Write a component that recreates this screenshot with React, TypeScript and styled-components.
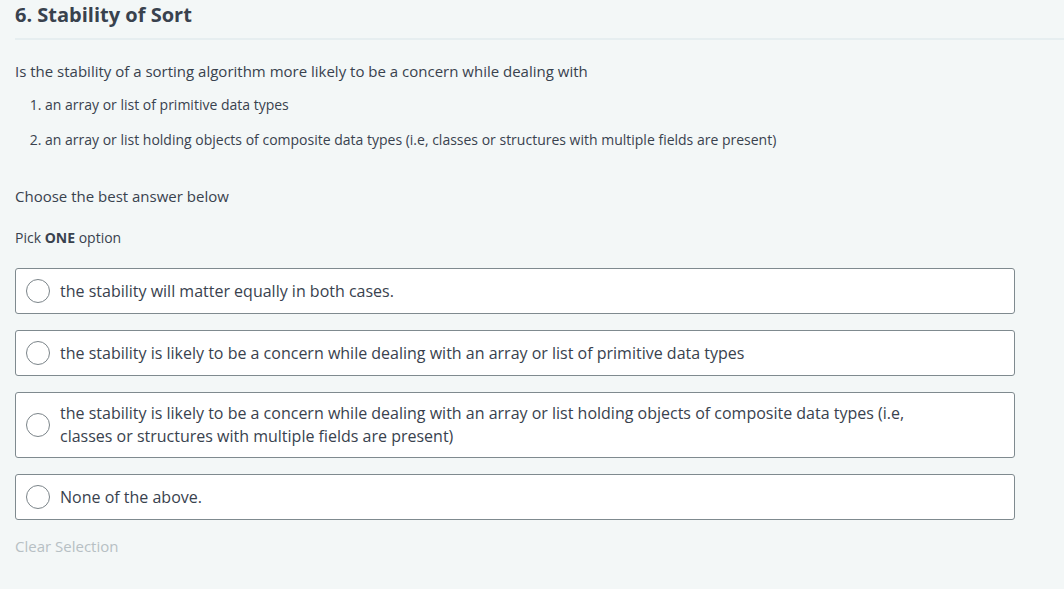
import React, { useState } from 'react';
import styled, { createGlobalStyle } from 'styled-components';

const GlobalStyle = createGlobalStyle`
  html, body {
    margin: 0;
    padding: 0;
    background: #f3f7f7;
  }
  body {
    font-family: 'Open Sans', 'Liberation Sans', sans-serif;
    color: #39424e;
  }
`;

interface IOption {
  id: number;
  label: string;
}

const options: IOption[] = [
  { id: 1, label: 'the stability will matter equally in both cases.' },
  {
    id: 2,
    label:
      'the stability is likely to be a concern while dealing with an array or list of primitive data types',
  },
  {
    id: 3,
    label:
      'the stability is likely to be a concern while dealing with an array or list holding objects of composite data types (i.e, classes or structures with multiple fields are present)',
  },
  { id: 4, label: 'None of the above.' },
];

const App: React.FC = () => {
  const [selected, setSelected] = useState<number | null>(null);

  return (
    <SPage>
      <GlobalStyle />
      <SHeader>
        <h1 className="title">6. Stability of Sort</h1>
      </SHeader>
      <SBody>
        <p className="question">
          Is the stability of a sorting algorithm more likely to be a concern while dealing with
        </p>
        <ol className="cases">
          <li>an array or list of primitive data types</li>
          <li>
            an array or list holding objects of composite data types (i.e, classes or structures
            with multiple fields are present)
          </li>
        </ol>
        <p className="prompt">Choose the best answer below</p>
        <p className="pick">
          Pick <b>ONE</b> option
        </p>
        <SOptions>
          {options.map((opt) => (
            <SOption key={opt.id} onClick={() => setSelected(opt.id)}>
              <SRadio $checked={selected === opt.id} />
              <span className="label">{opt.label}</span>
            </SOption>
          ))}
        </SOptions>
        <SClear onClick={() => setSelected(null)}>Clear Selection</SClear>
      </SBody>
    </SPage>
  );
};

export default App;

const SPage = styled.div`
  width: 1064px;
  height: 589px;
  overflow: hidden;
  padding-left: 15px;
  box-sizing: border-box;
`;

const SHeader = styled.header`
  border-bottom: 2px solid #e6eef0;
  height: 38px;
  .title {
    margin: 0;
    padding-top: 1px;
    font-size: 20px;
    line-height: 27px;
    font-weight: 700;
    color: #39424e;
  }
`;

const SBody = styled.section`
  width: 1000px;
  .question {
    margin: 21px 0 0;
    font-size: 15px;
    line-height: 21px;
  }
  .cases {
    margin: 13px 0 0;
    padding-left: 30px;
    font-size: 14px;
    line-height: 19px;
    li {
      margin-bottom: 16px;
      padding-left: 0;
    }
  }
  .prompt {
    margin: 37px 0 0;
    font-size: 15px;
    line-height: 21px;
  }
  .pick {
    margin: 21px 0 0;
    font-size: 14px;
    line-height: 19px;
    b {
      font-weight: 700;
    }
  }
`;

const SOptions = styled.div`
  display: flex;
  flex-direction: column;
  gap: 16px;
  margin-top: 21px;
`;

const SOption = styled.label`
  display: flex;
  align-items: center;
  gap: 10px;
  min-height: 46px;
  box-sizing: border-box;
  padding: 9px 100px 9px 10px;
  background: #ffffff;
  border: 1px solid #7f8a8f;
  border-radius: 3px;
  cursor: pointer;
  .label {
    font-size: 16px;
    line-height: 23px;
    color: #39424e;
  }
`;

const SRadio = styled.span<{ $checked: boolean }>`
  flex: none;
  width: 24px;
  height: 24px;
  box-sizing: border-box;
  border-radius: 50%;
  border: 1px solid #7b8489;
  background: #ffffff;
  box-shadow: ${(p) => (p.$checked ? 'inset 0 0 0 6px #ffffff, inset 0 0 0 12px #1ba94c' : 'none')};
`;

const SClear = styled.div`
  margin-top: 16px;
  font-size: 15px;
  line-height: 21px;
  color: #b7c0c4;
  cursor: pointer;
`;
